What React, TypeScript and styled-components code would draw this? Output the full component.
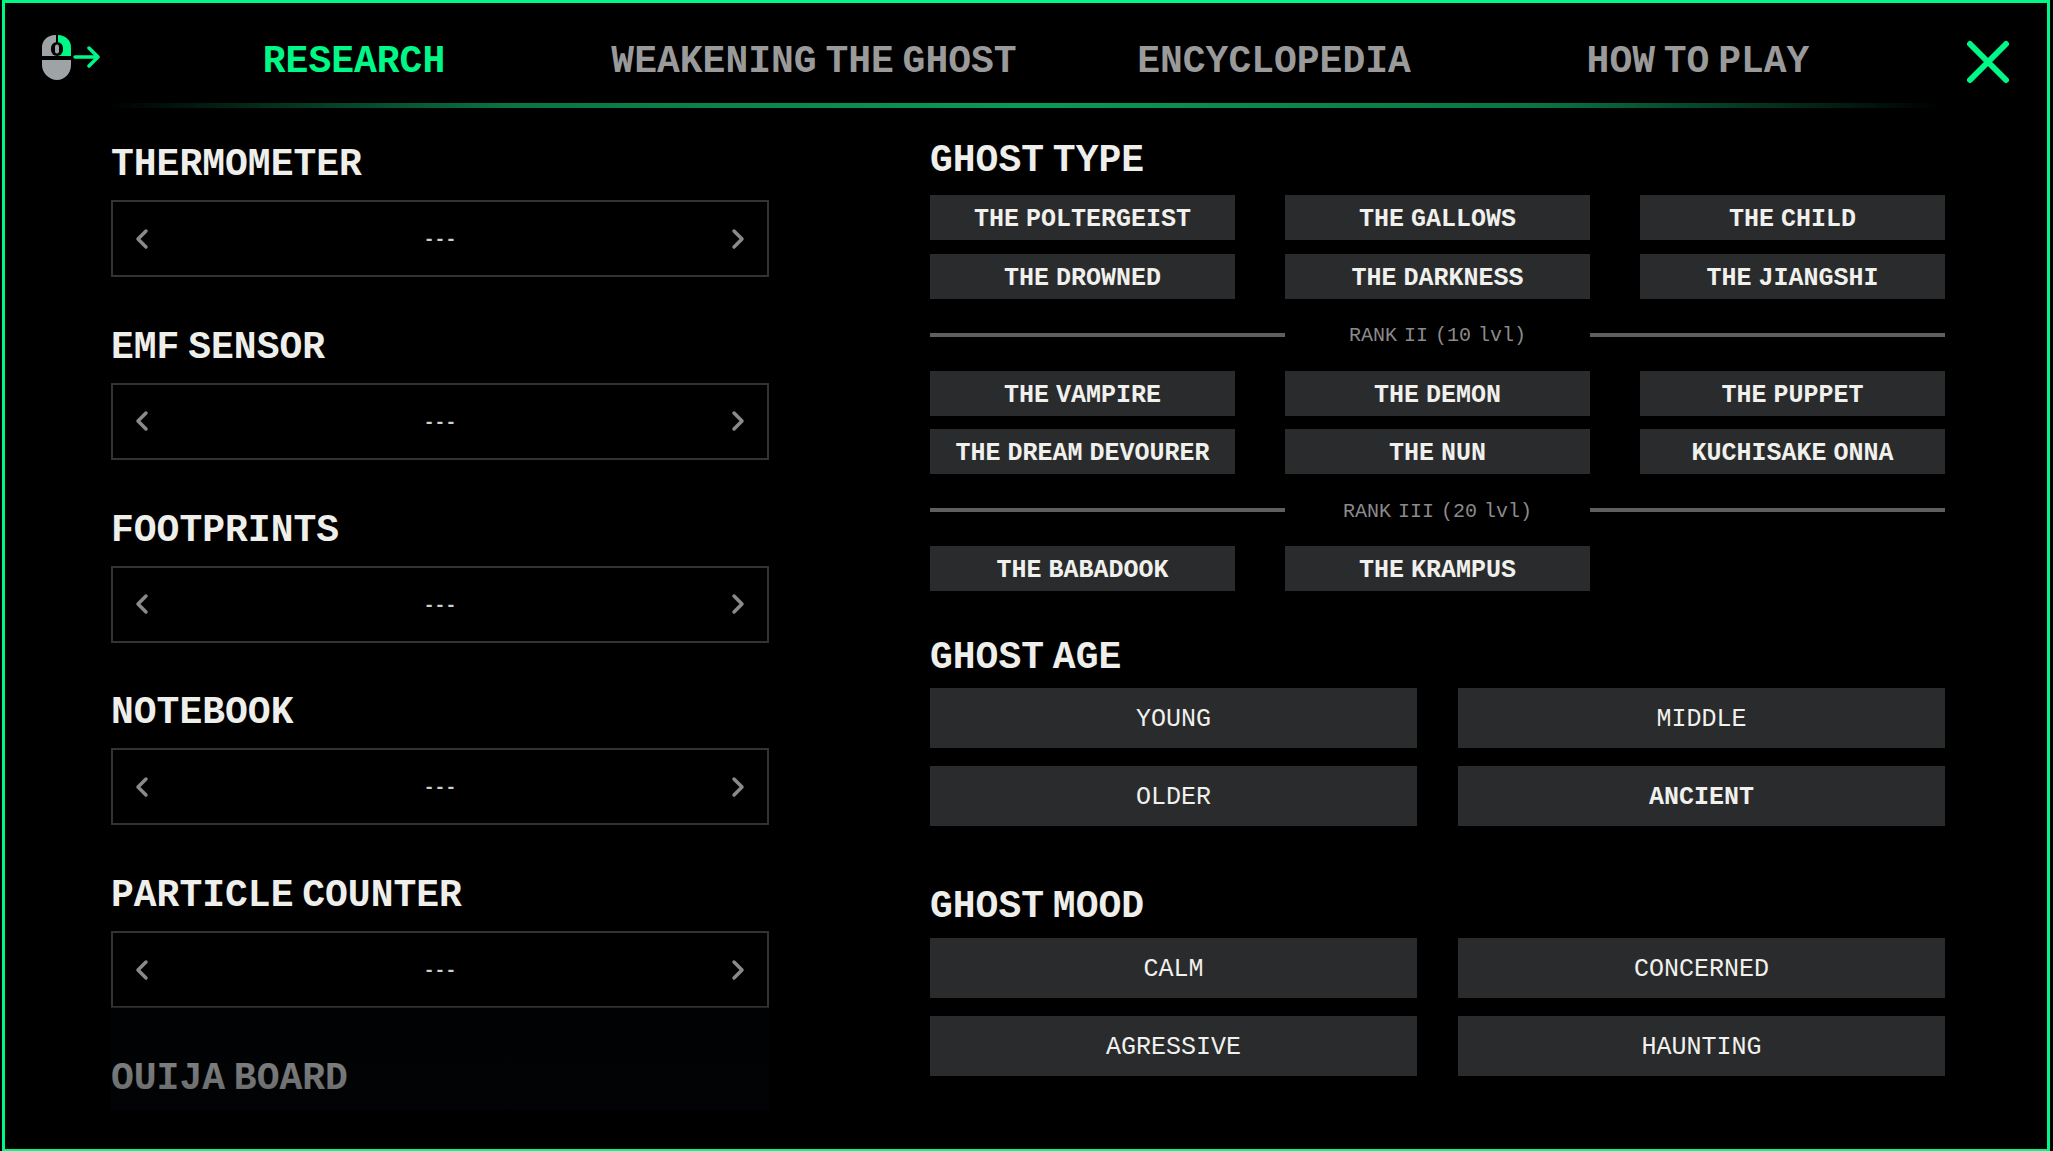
import React from "react";
import styled, { createGlobalStyle } from "styled-components";

const GREEN = "#00f887";
const FONT = `"Liberation Mono", "Courier New", monospace`;

const GlobalStyle = createGlobalStyle`
  html, body {
    margin: 0;
    background: #000;
  }
  * { box-sizing: border-box; }
`;

const Frame = styled.div`
  height: 1151px;
  margin: 0 3px 0 2px;
  border: solid ${GREEN};
  border-width: 3px 3px 2px 3px;
  background: #000;
  overflow: hidden;
  font-family: ${FONT};
`;

const Header = styled.div`
  display: flex;
  align-items: flex-start;
  height: 100px;
  padding-left: 37px;
`;

const MouseWrap = styled.div`
  width: 58px;
  margin-top: 32px;
  margin-right: 24px;
  line-height: 0;
`;

const Tabs = styled.nav`
  display: grid;
  grid-template-columns: 460px 460px 460px 388px;
  margin-top: 39px;
`;

const Tab = styled.div<{ $active?: boolean }>`
  text-align: center;
  font-size: 38px;
  line-height: 40px;
  word-spacing: -14px;
  font-weight: 700;
  color: ${(p) => (p.$active ? GREEN : "#9a9a9a")};
`;

const Close = styled.div`
  margin-left: 74px;
  margin-top: 37px;
  line-height: 0;
`;

const NavLine = styled.div`
  height: 5px;
  margin: 0 107px 0 103px;
  background: linear-gradient(90deg, rgba(0, 248, 135, 0), #0a7444 22%, #0a9a58 50%, #0a7444 78%, rgba(0, 248, 135, 0));
`;

const Body = styled.div`
  display: flex;
  padding-left: 106px;
  gap: 161px;
`;

const LeftCol = styled.div`
  position: relative;
  width: 658px;
  height: 1002px;
  padding-top: 34px;
  overflow: hidden;
  display: flex;
  flex-direction: column;
  gap: 47.75px;
`;

const Fade = styled.div`
  position: absolute;
  left: 0;
  right: 0;
  bottom: 0;
  height: 103px;
  background: linear-gradient(rgba(3, 5, 9, 0.35), rgba(3, 5, 9, 0.6));
`;

const Sensor = styled.div`
  flex: none;
`;

const Title = styled.h2<{ $gap?: number; $shift?: number }>`
  margin: 0 0 ${(p) => (p.$gap ?? 18) - (p.$shift ?? 3)}px 0;
  padding-top: ${(p) => p.$shift ?? 3}px;
  font-size: 38px;
  line-height: 40px;
  word-spacing: -14px;
  font-weight: 700;
  color: #eeeeea;
`;

const Stepper = styled.div`
  display: flex;
  align-items: center;
  justify-content: space-between;
  height: 77px;
  padding: 0 21px;
  border: 2px solid #333;
`;

const StepValue = styled.span`
  padding-top: 3px;
  font-size: 18px;
  font-weight: 700;
  color: #cfcfcf;
`;

const RightCol = styled.div`
  width: 1015px;
  padding-top: 29px;
`;

const TypeGrid = styled.div`
  display: grid;
  grid-template-columns: repeat(3, 305px);
  grid-auto-rows: 45px;
  column-gap: 50px;
  row-gap: 13.5px;
  margin-bottom: 44px;
`;

const ChoiceGrid = styled.div<{ $bottom: number }>`
  display: grid;
  grid-template-columns: repeat(2, 487px);
  grid-auto-rows: 60px;
  column-gap: 41px;
  row-gap: 18px;
  margin-bottom: ${(p) => p.$bottom}px;
`;

const Choice = styled.div<{ $light?: boolean }>`
  display: flex;
  align-items: center;
  justify-content: center;
  padding-top: 2px;
  background: #2a2b2d;
  color: #f0f0ec;
  font-size: 25px;
  word-spacing: -8px;
  font-weight: ${(p) => (p.$light ? 400 : 700)};
  white-space: nowrap;
`;

const TypeChoice = styled(Choice)`
  padding-top: 4px;
`;

const RankLine = styled.div<{ $side: "left" | "right" }>`
  align-self: center;
  height: 4px;
  background: #5f5f5f;
  margin-${(p) => p.$side}: -50px;
`;

const RankLabel = styled.div`
  display: flex;
  align-items: center;
  justify-content: center;
  padding-top: 2px;
  color: #8a8a8a;
  font-size: 20px;
  word-spacing: -5px;
  white-space: nowrap;
`;

const sensors = ["THERMOMETER", "EMF SENSOR", "FOOTPRINTS", "NOTEBOOK", "PARTICLE COUNTER"];

const Chevron = ({ flip }: { flip?: boolean }) => (
  <svg width="16" height="22" viewBox="0 0 16 22" fill="none">
    <path
      d={flip ? "M4 3l8 8-8 8" : "M12 3l-8 8 8 8"}
      stroke="#8a8a8a"
      strokeWidth="3.5"
      strokeLinecap="round"
      strokeLinejoin="round"
    />
  </svg>
);

const MouseIcon = () => (
  <svg width="58" height="45" viewBox="0 0 58 45" fill="none">
    <path d="M0 12C0 5 6 0 13 0h2v21H0z" fill="#9ea3a6" />
    <path d="M15 0h1c7 0 13 5 13 12v9H15z" fill={GREEN} />
    <path d="M0 25h29v5c0 8-6 15-14 15S0 38 0 30z" fill="#9ea3a6" />
    <rect x="14" y="0" width="2" height="8" fill="#000" />
    <rect x="9" y="7" width="12" height="14" rx="6" fill="#000" />
    <rect x="13" y="9.5" width="4" height="9" rx="2" fill="#9ea3a6" />
    <path d="M33 22h23M47 13l9 9-9 9" stroke={GREEN} strokeWidth="3.5" strokeLinecap="round" strokeLinejoin="round" />
  </svg>
);

const CloseIcon = () => (
  <svg width="44" height="44" viewBox="0 0 44 44" fill="none">
    <path d="M4 4l36 36M40 4L4 40" stroke={GREEN} strokeWidth="6" strokeLinecap="round" />
  </svg>
);

export default function App() {
  return (
    <Frame>
      <GlobalStyle />
      <Header>
        <MouseWrap>
          <MouseIcon />
        </MouseWrap>
        <Tabs>
          <Tab $active>RESEARCH</Tab>
          <Tab>WEAKENING THE GHOST</Tab>
          <Tab>ENCYCLOPEDIA</Tab>
          <Tab>HOW TO PLAY</Tab>
        </Tabs>
        <Close>
          <CloseIcon />
        </Close>
      </Header>
      <NavLine />
      <Body>
        <LeftCol>
          {sensors.map((name) => (
            <Sensor key={name}>
              <Title>{name}</Title>
              <Stepper>
                <Chevron />
                <StepValue>---</StepValue>
                <Chevron flip />
              </Stepper>
            </Sensor>
          ))}
          <Sensor>
            <Title>OUIJA BOARD</Title>
          </Sensor>
          <Fade />
        </LeftCol>
        <RightCol>
          <Title $shift={4}>GHOST TYPE</Title>
          <TypeGrid>
            <TypeChoice>THE POLTERGEIST</TypeChoice>
            <TypeChoice>THE GALLOWS</TypeChoice>
            <TypeChoice>THE CHILD</TypeChoice>
            <TypeChoice>THE DROWNED</TypeChoice>
            <TypeChoice>THE DARKNESS</TypeChoice>
            <TypeChoice>THE JIANGSHI</TypeChoice>
            <RankLine $side="right" />
            <RankLabel>RANK II (10 lvl)</RankLabel>
            <RankLine $side="left" />
            <TypeChoice>THE VAMPIRE</TypeChoice>
            <TypeChoice>THE DEMON</TypeChoice>
            <TypeChoice>THE PUPPET</TypeChoice>
            <TypeChoice>THE DREAM DEVOURER</TypeChoice>
            <TypeChoice>THE NUN</TypeChoice>
            <TypeChoice>KUCHISAKE ONNA</TypeChoice>
            <RankLine $side="right" />
            <RankLabel>RANK III (20 lvl)</RankLabel>
            <RankLine $side="left" />
            <TypeChoice>THE BABADOOK</TypeChoice>
            <TypeChoice>THE KRAMPUS</TypeChoice>
          </TypeGrid>
          <Title $gap={13}>GHOST AGE</Title>
          <ChoiceGrid $bottom={59}>
            <Choice $light>YOUNG</Choice>
            <Choice $light>MIDDLE</Choice>
            <Choice $light>OLDER</Choice>
            <Choice>ANCIENT</Choice>
          </ChoiceGrid>
          <Title $gap={13} $shift={2}>GHOST MOOD</Title>
          <ChoiceGrid $bottom={0}>
            <Choice $light>CALM</Choice>
            <Choice $light>CONCERNED</Choice>
            <Choice $light>AGRESSIVE</Choice>
            <Choice $light>HAUNTING</Choice>
          </ChoiceGrid>
        </RightCol>
      </Body>
    </Frame>
  );
}
